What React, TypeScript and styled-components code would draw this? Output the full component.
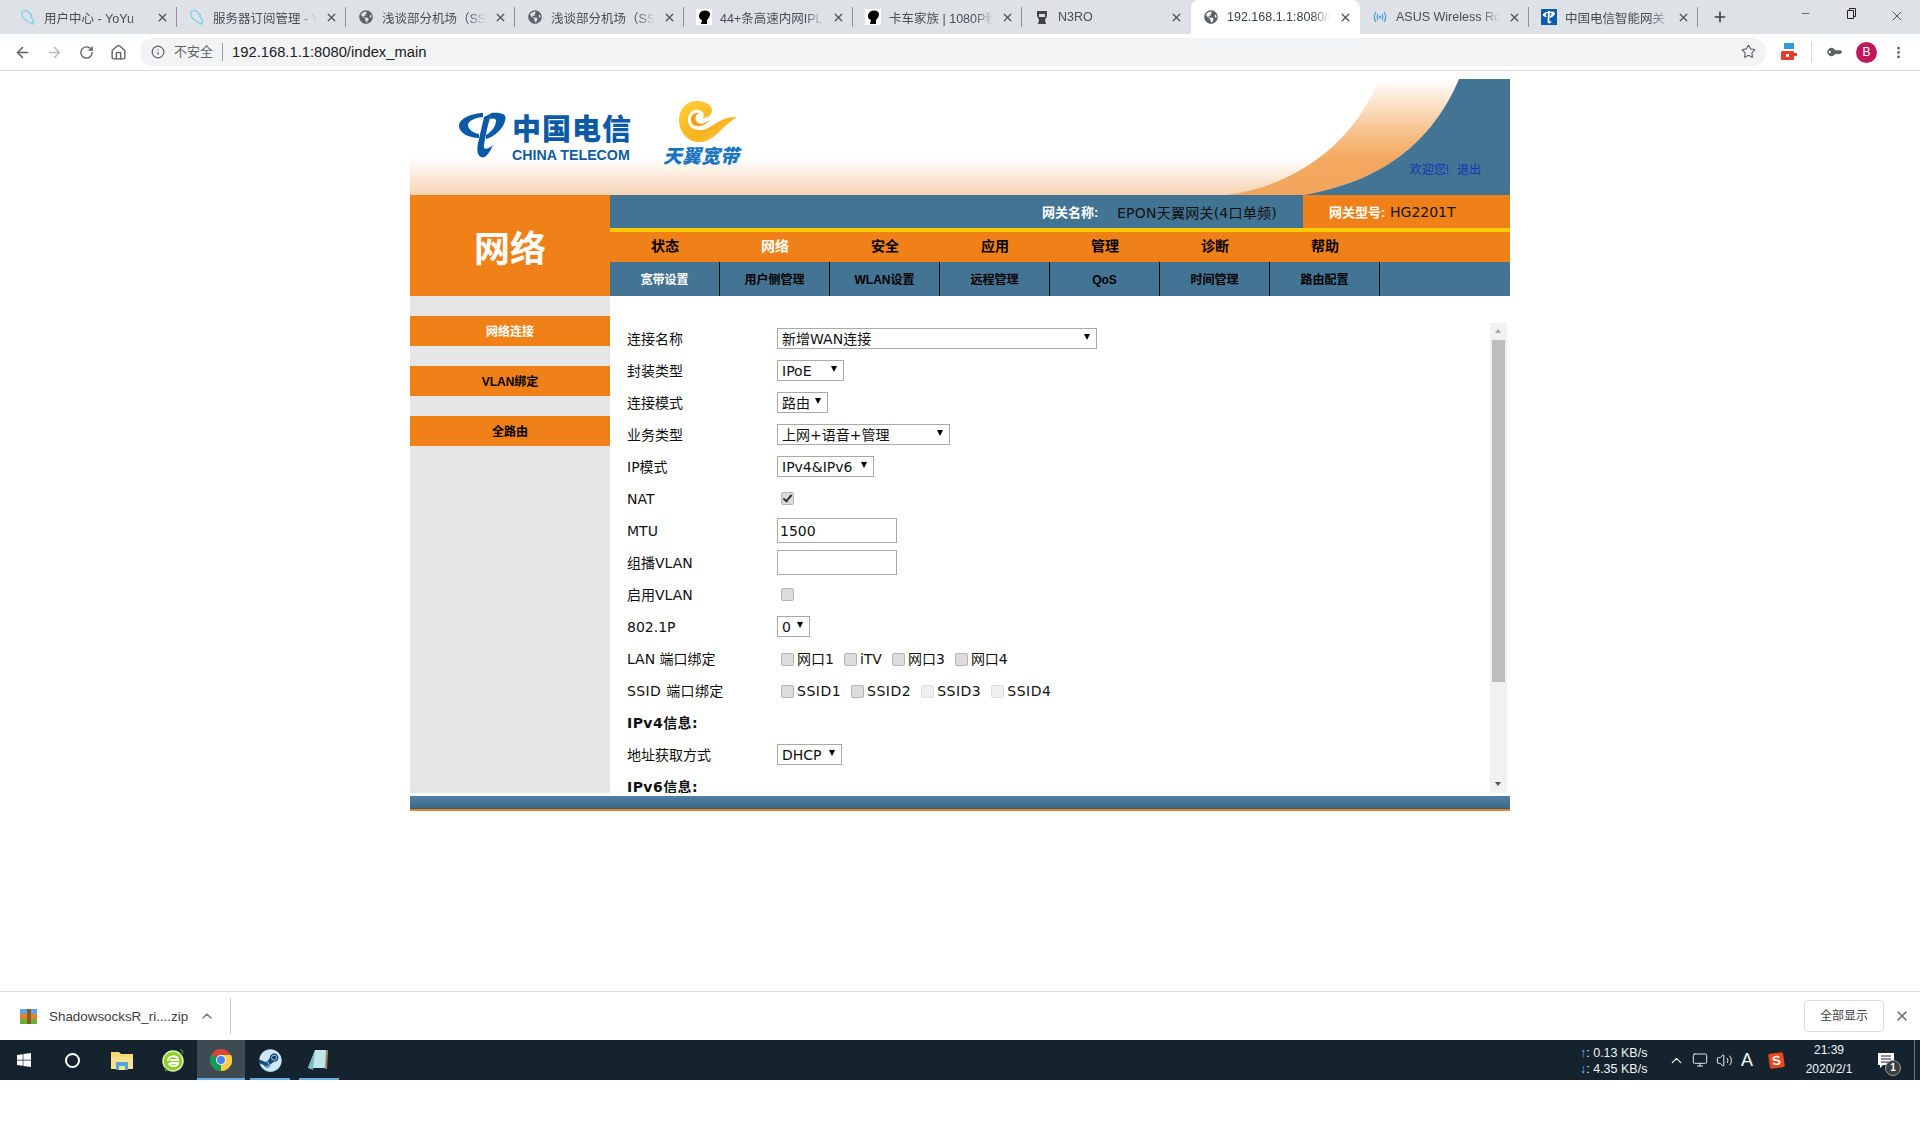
import styled, { createGlobalStyle } from 'styled-components'
import { ArrowLeft, ArrowRight, RotateCw, Home, Star, Info, X, Plus, Minus, ChevronUp, EllipsisVertical, Monitor, Volume2 } from 'lucide-react'
import { FaGlobeAmericas, FaWindows, FaSteam, FaKey } from 'react-icons/fa'

const tabs = [
  { title: '用户中心 - YoYu', icon: 'bird' },
  { title: '服务器订阅管理 - YoYu', icon: 'bird' },
  { title: '浅谈部分机场（SS/SSR）', icon: 'globe' },
  { title: '浅谈部分机场（SS/SSR）', icon: 'globe' },
  { title: '44+条高速内网IPLC节点', icon: 'head' },
  { title: '卡车家族 | 1080P秒开', icon: 'head' },
  { title: 'N3RO', icon: 'n3ro' },
  { title: '192.168.1.1:8080/index_main', icon: 'globe', active: true },
  { title: 'ASUS Wireless Router', icon: 'asus' },
  { title: '中国电信智能网关', icon: 'telecom' },
]

const mainNav = ['状态', '网络', '安全', '应用', '管理', '诊断', '帮助']
const subNav = ['宽带设置', '用户侧管理', 'WLAN设置', '远程管理', 'QoS', '时间管理', '路由配置']
const sideNav = ['网络连接', 'VLAN绑定', '全路由']

function TabIcon({ kind }: { kind: string }) {
  if (kind === 'globe') return <FaGlobeAmericas size={14} color="#5f6368" />
  if (kind === 'bird') {
    return (
      <svg width="16" height="16" viewBox="0 0 16 16" fill="none" stroke="#7fd3ea" strokeWidth="1.4">
        <path d="M2 3 C4 1 8 1 9 4 C11 5 12 6 11 8 C13 10 14 13 13 15 C10 14 7 13 6 11 C3 10 1 6 2 3Z" />
      </svg>
    )
  }
  if (kind === 'head') {
    return (
      <svg width="16" height="16" viewBox="0 0 16 16">
        <rect width="16" height="16" fill="#fff" />
        <path d="M4 4 C6 0 14 1 14 5 C14 8 12 10 11 11 L11 15 L5 15 L6 11 C3 10 2 7 4 4Z" fill="#000" />
      </svg>
    )
  }
  if (kind === 'n3ro') {
    return (
      <svg width="16" height="16" viewBox="0 0 16 16">
        <path d="M3 2 H13 V7 L11 11 L12 15 H4 L5 11 L3 7Z" fill="#444" />
        <rect x="5" y="5" width="6" height="3" fill="#ddd" />
      </svg>
    )
  }
  if (kind === 'asus') {
    return (
      <svg width="16" height="16" viewBox="0 0 16 16" fill="none" stroke="#4aa3d8" strokeWidth="1.3">
        <path d="M4 3 C2 6 2 10 4 13 M12 3 C14 6 14 10 12 13 M6 5 C5 7 5 9 6 11 M10 5 C11 7 11 9 10 11" />
        <circle cx="8" cy="8" r="1.2" fill="#4aa3d8" stroke="none" />
      </svg>
    )
  }
  return (
    <svg width="16" height="16" viewBox="0 0 16 16">
      <rect width="16" height="16" fill="#0b5cad" />
      <path d="M7 2 H9 L8.5 11 C8.5 13 10 13 11 12 C10 15 7 15 6.5 13Z M2 5 C4 3 6 3 7 3 L7 4 C5 4 4 6 6 8 C3 8 1 7 2 5Z M9 3 C12 2 14 3 14 5 C13 7 11 8 9 9 L9 7 C11 6 11 4 9 4Z" fill="#fff" />
    </svg>
  )
}

function BrowserTabs() {
  return (
    <TabStrip>
      {tabs.map((t, i) => (
        <Tab key={i} $active={!!t.active} $divider={i !== 6 && i !== 7}>
          <TabIconSlot><TabIcon kind={t.icon} /></TabIconSlot>
          <TabTitle $active={!!t.active}>{t.title}</TabTitle>
          <X size={13} strokeWidth={2.6} color="#55585c" />
        </Tab>
      ))}
      <NewTab><Plus size={16} strokeWidth={2.4} color="#3c4043" /></NewTab>
      <WindowControls>
        <WindowButton><Minus size={11} strokeWidth={1.4} color="#222" /></WindowButton>
        <WindowButton>
          <svg width="11" height="11" viewBox="0 0 11 11" fill="none" stroke="#222"><path d="M3.5 2.5 V0.5 H9.5 V8.5 H7.5 M1.5 2.5 H7.5 V10.5 H1.5Z" /></svg>
        </WindowButton>
        <WindowButton><X size={16} strokeWidth={1.1} color="#222" /></WindowButton>
      </WindowControls>
    </TabStrip>
  )
}

function BrowserToolbar() {
  return (
    <Toolbar>
      <ToolSlot $w={32}><ArrowLeft size={17} color="#5f6368" strokeWidth={2.2} /></ToolSlot>
      <ToolSlot $w={32}><ArrowRight size={17} color="#b8babd" strokeWidth={2.2} /></ToolSlot>
      <ToolSlot $w={32}><RotateCw size={15} color="#5f6368" strokeWidth={2.2} /></ToolSlot>
      <ToolSlot $w={32}><Home size={17} color="#5f6368" strokeWidth={2} /></ToolSlot>
      <Omnibox>
        <Info size={14} color="#5f6368" />
        <InsecureLabel>不安全</InsecureLabel>
        <UrlText>192.168.1.1:8080/index_main</UrlText>
        <Star size={15} color="#5f6368" strokeWidth={1.8} />
      </Omnibox>
      <ToolSlot $w={45}>
        <svg width="16" height="18" viewBox="0 0 16 18">
          <rect x="3" y="0" width="10" height="6" fill="#2f9be0" />
          <rect x="0" y="8" width="13" height="9" rx="1" fill="#e93a2e" />
          <rect x="11" y="10" width="5" height="3" fill="#e93a2e" />
          <rect x="5" y="11" width="3" height="3" fill="#fff" />
        </svg>
      </ToolSlot>
      <ToolDivider />
      <ToolSlot $w={44}><FaKey size={12} color="#5f6368" style={{ transform: 'scaleX(-1) rotate(45deg)' }} /></ToolSlot>
      <ToolSlot $w={21}><Avatar>B</Avatar></ToolSlot>
      <ToolSlot $w={43}><EllipsisVertical size={15} color="#5f6368" strokeWidth={2.6} /></ToolSlot>
    </Toolbar>
  )
}

function TelecomMark() {
  return (
    <svg width="49" height="48" viewBox="0 0 49 48" fill="#0b5aa6">
      <path d="M24 1 C14 1 0 6 0 14 C0 21 10 26 20 26 L20 22 C14 21 9 17 9 13 C9 9 15 6 24 5Z" />
      <path d="M25 5 L33 1 C29 10 27 22 25 33 C24 38 28 38 34 33 C30 42 26 47 22 45 C17 43 18 34 20 27 C22 18 24 10 25 5Z" />
      <path d="M32 1 C40 0 49 1 46 9 C44 17 35 25 27 27 L27 23 C33 20 37 13 37 9 C37 6 34 6 31 7Z" />
    </svg>
  )
}

function SwirlMark() {
  return (
    <svg width="60" height="42" viewBox="0 0 60 42">
      <defs>
        <linearGradient id="swirlA" x1="0" y1="0" x2="1" y2="1">
          <stop offset="0" stopColor="#ffd23a" />
          <stop offset="0.6" stopColor="#f7b21c" />
          <stop offset="1" stopColor="#ffd766" />
        </linearGradient>
      </defs>
      <path fill="url(#swirlA)" d="M18 0 C7 0 0 8 0 19 C0 32 10 42 22 41 C36 40 42 26 58 16 C46 15 38 22 29 27 C20 32 9 28 9 19 C9 12 14 8 20 9 C24 10 26 13 24 17 C30 17 33 13 33 9 C32 3 25 0 18 0Z" />
      <path fill="#f39a12" d="M12 20 C11 14 16 11 20 12 C16 14 15 19 19 22 C22 24 27 22 31 19 C26 26 14 28 12 20Z" />
    </svg>
  )
}

function Banner() {
  return (
    <HeaderBanner>
      <Swoosh viewBox="0 0 310 116" width="310" height="116" preserveAspectRatio="none">
        <defs>
          <linearGradient id="swooshFill" x1="0" y1="0" x2="0" y2="1">
            <stop offset="0" stopColor="#ffffff" />
            <stop offset="0.45" stopColor="#f7c28c" />
            <stop offset="0.7" stopColor="#f4a860" />
            <stop offset="1" stopColor="#f2a55c" />
          </linearGradient>
        </defs>
        <path fill="url(#swooshFill)" d="M179 0 C160 50 110 105 26 116 L103 116 C200 100 240 45 259 0Z" />
        <path fill="#447493" d="M259 0 C240 45 200 100 103 116 L310 116 L310 0Z" />
      </Swoosh>
      <TelecomLogo>
        <TelecomMark />
        <TelecomWords>
          <TelecomCn>中国电信</TelecomCn>
          <TelecomEn>CHINA TELECOM</TelecomEn>
        </TelecomWords>
      </TelecomLogo>
      <TianyiLogo>
        <SwirlMark />
        <TianyiText>天翼宽带</TianyiText>
      </TianyiLogo>
      <Welcome>
        <span>欢迎您!</span>
        <span>退出</span>
      </Welcome>
    </HeaderBanner>
  )
}

function Masthead() {
  return (
    <MastheadRow>
      <SectionTitle>网络</SectionTitle>
      <MastheadBars>
        <InfoBar>
          <GatewayName>
            <InfoLabel $w={75}>网关名称:</InfoLabel>
            <InfoValue $spaced>EPON天翼网关(4口单频)</InfoValue>
          </GatewayName>
          <GatewayModel>
            <InfoLabel $w={61}>网关型号:</InfoLabel>
            <InfoValue>HG2201T</InfoValue>
          </GatewayModel>
        </InfoBar>
        <MainNav>
          {mainNav.map((n, i) => <MainNavItem key={n} $active={i === 1}>{n}</MainNavItem>)}
        </MainNav>
        <SubNav>
          {subNav.map((n, i) => <SubNavItem key={n} $active={i === 0}>{n}</SubNavItem>)}
        </SubNav>
      </MastheadBars>
    </MastheadRow>
  )
}

function Select({ value, width }: { value: string; width: number }) {
  return (
    <SelectBox $w={width}>
      <SelectField defaultValue={value}>
        <option>{value}</option>
      </SelectField>
    </SelectBox>
  )
}

function CheckItem({ label, disabled, spaced }: { label: string; disabled?: boolean; spaced?: boolean }) {
  return (
    <CheckLabel $spaced={spaced}>
      <CheckBox type="checkbox" disabled={disabled} />
      {label}
    </CheckLabel>
  )
}

function ConnectionForm() {
  return (
    <FormPane>
      <FormRow><RowLabel>连接名称</RowLabel><Select value="新增WAN连接" width={320} /></FormRow>
      <FormRow><RowLabel>封装类型</RowLabel><Select value="IPoE" width={67} /></FormRow>
      <FormRow><RowLabel>连接模式</RowLabel><Select value="路由" width={51} /></FormRow>
      <FormRow><RowLabel>业务类型</RowLabel><Select value="上网+语音+管理" width={173} /></FormRow>
      <FormRow><RowLabel>IP模式</RowLabel><Select value="IPv4&IPv6" width={97} /></FormRow>
      <FormRow><RowLabel>NAT</RowLabel><CheckBox type="checkbox" defaultChecked /></FormRow>
      <FormRow><RowLabel>MTU</RowLabel><TextInput defaultValue="1500" /></FormRow>
      <FormRow><RowLabel>组播VLAN</RowLabel><TextInput /></FormRow>
      <FormRow><RowLabel>启用VLAN</RowLabel><CheckBox type="checkbox" /></FormRow>
      <FormRow><RowLabel>802.1P</RowLabel><Select value="0" width={33} /></FormRow>
      <FormRow>
        <RowLabel>LAN 端口绑定</RowLabel>
        <CheckGroup>
          <CheckItem label="网口1" />
          <CheckItem label="iTV" />
          <CheckItem label="网口3" />
          <CheckItem label="网口4" />
        </CheckGroup>
      </FormRow>
      <FormRow>
        <RowLabel $spaced>SSID 端口绑定</RowLabel>
        <CheckGroup>
          <CheckItem label="SSID1" spaced />
          <CheckItem label="SSID2" spaced />
          <CheckItem label="SSID3" spaced disabled />
          <CheckItem label="SSID4" spaced disabled />
        </CheckGroup>
      </FormRow>
      <FormRow><GroupTitle>IPv4信息:</GroupTitle></FormRow>
      <FormRow><RowLabel>地址获取方式</RowLabel><Select value="DHCP" width={65} /></FormRow>
      <FormRow><GroupTitle>IPv6信息:</GroupTitle></FormRow>
    </FormPane>
  )
}

function TaskBar() {
  return (
    <Taskbar>
      <TaskSlot $w={48}><FaWindows size={16} color="#fff" /></TaskSlot>
      <TaskSlot $w={48}><CortanaRing /></TaskSlot>
      <TaskSlot $w={52}>
        <svg width="22" height="19" viewBox="0 0 22 19">
          <path d="M0 1 H8 L10 3 H22 V18 H0Z" fill="#f6d775" />
          <rect x="0" y="6" width="22" height="12" fill="#fde28d" />
          <rect x="5" y="11" width="12" height="8" fill="#4ea6dc" />
          <rect x="8" y="15" width="6" height="4" fill="#fde28d" />
        </svg>
      </TaskSlot>
      <TaskSlot $w={49}>
        <svg width="22" height="23" viewBox="0 0 22 23">
          <circle cx="11" cy="12" r="10" fill="#8ed02a" stroke="#dff5b0" strokeWidth="1.5" />
          <path d="M6 12 C6 6 16 6 16 11 H8 M8 14 H16 C15 18 8 18 7 14" fill="none" stroke="#fff" strokeWidth="2" />
          <path d="M18 1 C21 1 22 3 19 6 M4 19 C2 22 4 22 6 21" fill="none" stroke="#2d8a2d" strokeWidth="1.4" />
        </svg>
      </TaskSlot>
      <TaskSlot $w={48} $active $underline>
        <svg width="22" height="22" viewBox="0 0 22 22">
          <circle cx="11" cy="11" r="11" fill="#db4437" />
          <path d="M11 11 L1.5 5.5 A11 11 0 0 0 11 22Z" fill="#0f9d58" />
          <path d="M11 11 L11 22 A11 11 0 0 0 21 6 L11 6Z" fill="#ffcd40" />
          <circle cx="11" cy="11" r="5" fill="#fff" />
          <circle cx="11" cy="11" r="4" fill="#4285f4" />
        </svg>
      </TaskSlot>
      <TaskSlot $w={40} $ml={5} $underline>
        <SteamBadge><FaSteam size={23} color="#cfe6f5" /></SteamBadge>
      </TaskSlot>
      <TaskSlot $w={40} $ml={9} $underline>
        <svg width="22" height="22" viewBox="0 0 22 22">
          <path d="M7 1 L20 1 L18 19 L0 19Z" fill="#bfe6ea" />
          <path d="M7 1 L0 19 L5 21 Z" fill="#7fb7c4" />
          <path d="M18 1 L20 1 L19 20 L17 20Z" fill="#a08050" />
        </svg>
      </TaskSlot>
      <TraySpeed>
        <SpeedLine><SpeedArrow>↑</SpeedArrow>: 0.13 KB/s</SpeedLine>
        <SpeedLine><SpeedArrow>↓</SpeedArrow>: 4.35 KB/s</SpeedLine>
      </TraySpeed>
      <TaskSlot $w={24}><ChevronUp size={17} color="#fff" strokeWidth={1.5} /></TaskSlot>
      <TaskSlot $w={24}><Monitor size={16} color="#fff" strokeWidth={1.3} /></TaskSlot>
      <TaskSlot $w={24}><Volume2 size={17} color="#fff" strokeWidth={1.3} /></TaskSlot>
      <TaskSlot $w={22}><ImeGlyph>A</ImeGlyph></TaskSlot>
      <TaskSlot $w={36}><SogouBadge>S</SogouBadge></TaskSlot>
      <Clock>
        <span>21:39</span>
        <span>2020/2/1</span>
      </Clock>
      <TaskSlot $w={44}>
        <NoticeIcon>
          <svg width="16" height="16" viewBox="0 0 16 16">
            <path d="M0 0 H16 V12 H5 L2 15 V12 H0Z" fill="#fff" />
            <path d="M3 3 H13 M3 6 H13 M3 9 H13" stroke="#14232d" strokeWidth="1" />
          </svg>
          <NoticeCount>1</NoticeCount>
        </NoticeIcon>
      </TaskSlot>
      <ShowDesktop />
    </Taskbar>
  )
}

export default function App() {
  return (
    <>
      <GlobalStyle />
      <Screen>
        <BrowserTabs />
        <BrowserToolbar />
        <PageArea>
          <Gateway>
            <Banner />
            <Masthead />
            <ContentRow>
              <SideMenu>
                {sideNav.map((n, i) => <SideButton key={n} $active={i === 0}>{n}</SideButton>)}
              </SideMenu>
              <ConnectionForm />
              <ScrollTrack>
                <ScrollArrow $up />
                <ScrollThumb />
                <ScrollRest />
                <ScrollArrow />
              </ScrollTrack>
            </ContentRow>
            <PageFooter />
          </Gateway>
        </PageArea>
        <DownloadBar>
          <svg width="17" height="15" viewBox="0 0 17 15">
            <rect y="0" width="17" height="5" fill="#5aa6e8" />
            <rect y="5" width="17" height="5" fill="#e0822a" />
            <rect y="10" width="17" height="5" fill="#6aae3a" />
            <rect x="7" width="4" height="15" fill="#8a5a20" />
          </svg>
          <DownloadName>ShadowsocksR_ri....zip</DownloadName>
          <ChevronUp size={16} color="#7a7d80" strokeWidth={2.2} />
          <DownloadDivider />
          <ShowAll>全部显示</ShowAll>
          <X size={16} color="#6f7275" strokeWidth={2.4} />
        </DownloadBar>
        <TaskBar />
        <BlankStrip />
      </Screen>
    </>
  )
}

const cnSans = `"Liberation Sans", "Noto Sans CJK SC", sans-serif`
const formFont = `"DejaVu Sans", "Noto Sans CJK SC", sans-serif`
const orange = '#f08119'
const steel = '#447493'

const GlobalStyle = createGlobalStyle`
  html, body { margin: 0; padding: 0; background: #fff; }
  #root { width: 1920px; height: 1130px; overflow: hidden; }
`

const Screen = styled.div`
  display: flex;
  flex-direction: column;
  width: 1920px;
  height: 1130px;
  font-family: ${cnSans};
  color: #000;
`

const TabStrip = styled.div`
  display: flex;
  align-items: stretch;
  height: 34px;
  padding-left: 8px;
  background: #dee1e6;
`

const Tab = styled.div<{ $active: boolean; $divider: boolean }>`
  position: relative;
  display: flex;
  align-items: center;
  box-sizing: border-box;
  width: 169px;
  padding: 0 8px 0 12px;
  background: ${p => (p.$active ? '#fff' : 'transparent')};
  border-radius: ${p => (p.$active ? '8px 8px 0 0' : '0')};
  &::after {
    content: '';
    display: ${p => (p.$divider ? 'block' : 'none')};
    position: absolute;
    right: 0;
    top: 7px;
    bottom: 7px;
    width: 1px;
    background: #8f9399;
  }
`

const TabIconSlot = styled.span`
  display: flex;
  align-items: center;
  justify-content: center;
  flex: 0 0 16px;
  height: 16px;
  margin-right: 8px;
`

const TabTitle = styled.span<{ $active: boolean }>`
  flex: 1;
  min-width: 0;
  margin-right: 8px;
  overflow: hidden;
  white-space: nowrap;
  font-size: 12.5px;
  color: ${p => (p.$active ? '#3c4043' : '#4a4d52')};
  -webkit-mask-image: linear-gradient(to right, #000 82%, transparent 100%);
  mask-image: linear-gradient(to right, #000 82%, transparent 100%);
`

const NewTab = styled.div`
  display: flex;
  align-items: center;
  justify-content: center;
  width: 34px;
  margin-left: 5px;
`

const WindowControls = styled.div`
  display: flex;
  margin-left: auto;
  padding-right: 0;
`

const WindowButton = styled.div`
  display: flex;
  align-items: flex-start;
  justify-content: center;
  width: 46px;
  padding-top: 8px;
`

const Toolbar = styled.div`
  display: flex;
  align-items: center;
  box-sizing: border-box;
  height: 37px;
  padding-left: 6px;
  background: #fff;
  border-bottom: 1px solid #dadce0;
`

const ToolSlot = styled.div<{ $w: number }>`
  display: flex;
  align-items: center;
  justify-content: center;
  flex: 0 0 ${p => p.$w}px;
`

const ToolDivider = styled.div`
  flex: 0 0 1px;
  height: 20px;
  background: #dadce0;
`

const Omnibox = styled.div`
  display: flex;
  align-items: center;
  flex: 1;
  height: 28px;
  margin: 0 0 1px 6px;
  padding: 0 10px 0 11px;
  background: #f1f3f4;
  border-radius: 14px;
`

const InsecureLabel = styled.span`
  margin-left: 9px;
  padding-right: 9px;
  font-size: 13px;
  line-height: 18px;
  color: #5f6368;
  border-right: 1px solid #9aa0a6;
`

const UrlText = styled.span`
  flex: 1;
  margin-left: 9px;
  font-size: 14.75px;
  color: #202124;
`

const Avatar = styled.div`
  display: flex;
  align-items: center;
  justify-content: center;
  width: 21px;
  height: 21px;
  border-radius: 50%;
  background: #c2185b;
  color: #fff;
  font-size: 12px;
`

const PageArea = styled.div`
  flex: 0 0 920px;
  box-sizing: border-box;
  padding-top: 8px;
  background: #fff;
`

const Gateway = styled.div`
  width: 1100px;
  margin: 0 auto;
`

const HeaderBanner = styled.div`
  position: relative;
  display: flex;
  align-items: flex-start;
  height: 116px;
  padding-left: 49px;
  box-sizing: border-box;
  overflow: hidden;
  background: linear-gradient(to bottom, #fff 0%, #fff 68%, #f6d3b2 100%);
`

const Swoosh = styled.svg`
  position: absolute;
  right: 0;
  top: 0;
`

const TelecomLogo = styled.div`
  position: relative;
  display: flex;
  gap: 4px;
  margin-top: 33px;
`

const TelecomWords = styled.div`
  display: flex;
  flex-direction: column;
`

const TelecomCn = styled.div`
  width: 118px;
  font-size: 29px;
  line-height: 36px;
  font-weight: 900;
  letter-spacing: 1px;
  color: #0b5aa6;
  white-space: nowrap;
`

const TelecomEn = styled.div`
  font-size: 14.2px;
  line-height: 14px;
  font-weight: 700;
  color: #0f5c9e;
  white-space: nowrap;
`

const TianyiLogo = styled.div`
  display: flex;
  flex-direction: column;
  align-items: flex-end;
  width: 78px;
  margin: 22px 0 0 31px;
`

const TianyiText = styled.div`
  margin-top: 4px;
  font-size: 19px;
  line-height: 20px;
  font-style: italic;
  font-weight: 900;
  color: #1a74c0;
  white-space: nowrap;
`

const Welcome = styled.div`
  position: relative;
  display: flex;
  gap: 8px;
  margin: 83px 29px 0 auto;
  font-size: 12px;
  line-height: 16px;
  color: #0c37b8;
`

const MastheadRow = styled.div`
  display: flex;
  height: 101px;
`

const SectionTitle = styled.div`
  display: flex;
  align-items: center;
  justify-content: center;
  flex: 0 0 200px;
  background: ${orange};
  color: #fff;
  font-size: 36px;
  font-weight: 700;
`

const MastheadBars = styled.div`
  flex: 1;
  display: flex;
  flex-direction: column;
`

const InfoBar = styled.div`
  display: flex;
  justify-content: flex-end;
  flex: 0 0 33px;
  background: ${steel};
  border-bottom: 4px solid #ffcb05;
`

const GatewayName = styled.div`
  display: flex;
  align-items: center;
  margin-right: 26px;
`

const GatewayModel = styled.div`
  display: flex;
  align-items: center;
  flex: 0 0 207px;
  box-sizing: border-box;
  padding-left: 26px;
  background: ${orange};
`

const InfoLabel = styled.span<{ $w: number }>`
  width: ${p => p.$w}px;
  color: #fff;
  font-size: 13px;
  font-weight: 700;
`

const InfoValue = styled.span<{ $spaced?: boolean }>`
  font-family: ${formFont};
  font-size: 14px;
  letter-spacing: ${p => (p.$spaced ? '0.25px' : '0')};
  color: #111;
  white-space: nowrap;
`

const MainNav = styled.div`
  display: flex;
  flex: 0 0 30px;
  background: ${orange};
`

const MainNavItem = styled.div<{ $active: boolean }>`
  width: 110px;
  height: 30px;
  text-align: center;
  line-height: 28px;
  font-size: 14px;
  font-weight: 700;
  color: ${p => (p.$active ? '#fff' : '#000')};
`

const SubNav = styled.div`
  display: flex;
  flex: 0 0 34px;
  background: ${steel};
`

const SubNavItem = styled.div<{ $active: boolean }>`
  box-sizing: border-box;
  width: 110px;
  height: 34px;
  border-right: 1px solid #000;
  text-align: center;
  line-height: 36px;
  font-size: 12px;
  font-weight: 700;
  color: ${p => (p.$active ? '#fff' : '#000')};
`

const ContentRow = styled.div`
  display: flex;
  height: 497px;
`

const SideMenu = styled.div`
  display: flex;
  flex-direction: column;
  gap: 20px;
  flex: 0 0 200px;
  box-sizing: border-box;
  padding-top: 20px;
  background: #e6e6e6;
`

const SideButton = styled.div<{ $active: boolean }>`
  height: 30px;
  line-height: 32px;
  text-align: center;
  background: ${orange};
  font-size: 12px;
  font-weight: 700;
  color: ${p => (p.$active ? '#fff' : '#000')};
`

const FormPane = styled.div`
  flex: 1;
  min-width: 0;
  box-sizing: border-box;
  padding: 27px 0 0 17px;
  overflow: hidden;
  font-family: ${formFont};
  font-size: 14px;
  line-height: 17px;
  color: #111;
`

const FormRow = styled.div`
  display: flex;
  align-items: center;
  height: 32px;
`

const RowLabel = styled.div<{ $spaced?: boolean }>`
  flex: 0 0 150px;
  white-space: nowrap;
  letter-spacing: ${p => (p.$spaced ? '0.4px' : '0')};
`

const GroupTitle = styled.div`
  font-weight: 700;
  letter-spacing: 0.45px;
`

const SelectBox = styled.div<{ $w: number }>`
  position: relative;
  box-sizing: border-box;
  width: ${p => p.$w}px;
  height: 21px;
  margin-bottom: 1px;
  &::after {
    content: '';
    position: absolute;
    right: 7px;
    top: 6px;
    border-style: solid;
    border-width: 6px 3px 0;
    border-color: #000 transparent transparent;
    pointer-events: none;
  }
`

const SelectField = styled.select`
  appearance: none;
  display: block;
  box-sizing: border-box;
  width: 100%;
  height: 100%;
  margin: 0;
  padding: 0 0 0 4px;
  background: #fff;
  border: 1px solid #a9a9a9;
  border-radius: 0;
  font-family: ${formFont};
  font-size: 14px;
  color: #111;
  outline: none;
`

const TextInput = styled.input`
  box-sizing: border-box;
  width: 120px;
  height: 25px;
  margin: 0 0 1px;
  padding: 0 2px;
  background: #fff;
  border: 1px solid #a9a9a9;
  font-family: ${formFont};
  font-size: 14px;
  color: #111;
  outline: none;
`

const CheckBox = styled.input`
  appearance: none;
  position: relative;
  flex: 0 0 13px;
  box-sizing: border-box;
  width: 13px;
  height: 13px;
  margin: 0 3px 2px 4px;
  background: #dcdcdc;
  border: 1px solid #b5b5b5;
  border-radius: 2px;
  &:disabled {
    background: #f0f0f0;
    border-color: #dedede;
  }
  &:checked::after {
    content: '';
    position: absolute;
    left: 3px;
    top: 0px;
    width: 3px;
    height: 7px;
    border: solid #333;
    border-width: 0 2px 2px 0;
    transform: rotate(40deg);
  }
`

const CheckGroup = styled.div`
  display: flex;
  align-items: center;
  gap: 6px;
`

const CheckLabel = styled.label<{ $spaced?: boolean }>`
  display: flex;
  align-items: center;
  white-space: nowrap;
  letter-spacing: ${p => (p.$spaced ? '0.5px' : '0')};
  > input {
    margin-bottom: 0;
  }
`

const ScrollTrack = styled.div`
  display: flex;
  flex-direction: column;
  flex: 0 0 17px;
  height: 470px;
  margin: 27px 3px 0 0;
  background: #f1f1f1;
`

const ScrollArrow = styled.div<{ $up?: boolean }>`
  flex: 0 0 17px;
  position: relative;
  &::after {
    content: '';
    position: absolute;
    left: 5px;
    top: 6px;
    border-style: solid;
    border-width: ${p => (p.$up ? '0 3.5px 4px' : '4px 3.5px 0')};
    border-color: ${p => (p.$up ? 'transparent transparent #a3a3a3' : '#505050 transparent transparent')};
  }
`

const ScrollThumb = styled.div`
  flex: 0 0 342px;
  margin: 0 2px;
  background: #bdbdbd;
`

const ScrollRest = styled.div`
  flex: 1;
`

const PageFooter = styled.div`
  height: 13px;
  margin-top: 3px;
  background: linear-gradient(to bottom, #4f7fa6, #3f6c8e 80%, #2b5f80);
  border-bottom: 2px solid ${orange};
`

const DownloadBar = styled.div`
  display: flex;
  align-items: center;
  flex: 0 0 49px;
  box-sizing: border-box;
  padding: 0 10px 0 20px;
  background: #fff;
  border-top: 1px solid #dadada;
`

const DownloadName = styled.span`
  margin: 1px 12px 0 12px;
  width: 138px;
  font-size: 13.4px;
  color: #3c4043;
  white-space: nowrap;
`

const DownloadDivider = styled.div`
  width: 1px;
  height: 36px;
  margin-left: 15px;
  background: #cfcfcf;
`

const ShowAll = styled.div`
  margin: 0 10px 0 auto;
  box-sizing: border-box;
  width: 80px;
  height: 32px;
  line-height: 30px;
  text-align: center;
  border: 1px solid #dadce0;
  border-radius: 4px;
  font-size: 12px;
  color: #3c4043;
`

const Taskbar = styled.div`
  display: flex;
  align-items: stretch;
  flex: 0 0 40px;
  background: #14232d;
  color: #fff;
`

const TaskSlot = styled.div<{ $w: number; $ml?: number; $active?: boolean; $underline?: boolean }>`
  position: relative;
  display: flex;
  align-items: center;
  justify-content: center;
  flex: 0 0 ${p => p.$w}px;
  margin-left: ${p => p.$ml ?? 0}px;
  background: ${p => (p.$active ? '#3e4b53' : 'transparent')};
  &::after {
    content: '';
    display: ${p => (p.$underline ? 'block' : 'none')};
    position: absolute;
    left: 0;
    right: 0;
    bottom: 0;
    height: 2px;
    background: #63ade6;
  }
`

const CortanaRing = styled.div`
  box-sizing: border-box;
  width: 15px;
  height: 15px;
  border: 2px solid #fff;
  border-radius: 50%;
`

const SteamBadge = styled.div`
  display: flex;
  align-items: center;
  justify-content: center;
  width: 23px;
  height: 23px;
  border-radius: 50%;
  background: linear-gradient(to bottom, #0f2a4d, #1a6aa8);
`

const TraySpeed = styled.div`
  display: flex;
  flex-direction: column;
  justify-content: center;
  gap: 1px;
  margin: 2px 16px 0 auto;
  width: 68px;
  font-size: 12.5px;
  line-height: 15px;
  white-space: nowrap;
`

const SpeedLine = styled.div`
  color: #f2f6f8;
`

const SpeedArrow = styled.span`
  color: #6db8ec;
`

const ImeGlyph = styled.span`
  font-size: 18px;
  color: #fff;
`

const SogouBadge = styled.div`
  width: 15px;
  height: 15px;
  line-height: 15px;
  text-align: center;
  background: #e8481c;
  border-radius: 2px;
  transform: rotate(-8deg);
  font-size: 13px;
  font-weight: 700;
  color: #fff;
`

const Clock = styled.div`
  display: flex;
  flex-direction: column;
  align-items: center;
  justify-content: center;
  gap: 4px;
  flex: 0 0 70px;
  font-size: 12px;
  line-height: 15px;
  color: #f2f6f8;
`

const NoticeIcon = styled.div`
  position: relative;
  width: 16px;
  height: 16px;
  margin-top: 2px;
`

const NoticeCount = styled.span`
  position: absolute;
  left: 7px;
  top: 7px;
  width: 14px;
  height: 14px;
  line-height: 14px;
  text-align: center;
  border-radius: 50%;
  background: #3a3f44;
  border: 1px solid #999;
  font-size: 10px;
  font-weight: 700;
  color: #fff;
`

const ShowDesktop = styled.div`
  flex: 0 0 5px;
  margin-left: 6px;
  border-left: 1px solid #6d7880;
`

const BlankStrip = styled.div`
  flex: 1;
  background: #fff;
`
